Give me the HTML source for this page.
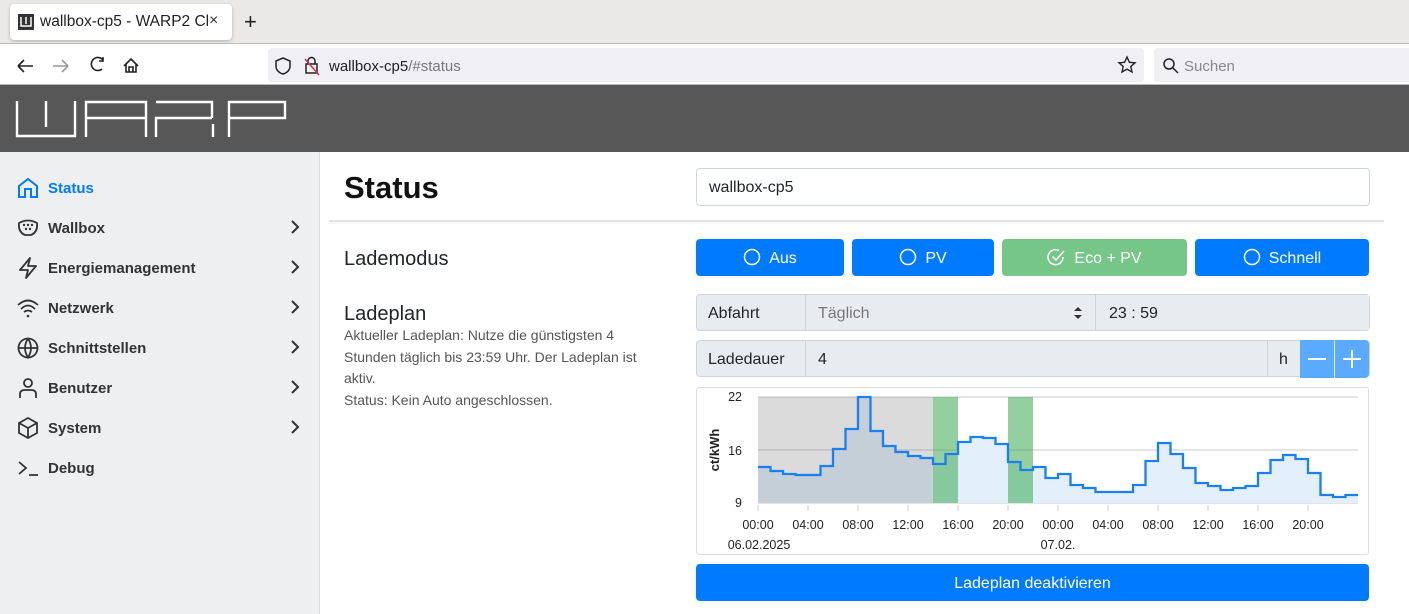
<!DOCTYPE html>
<html><head><meta charset="utf-8"><style>
*{box-sizing:border-box;margin:0;padding:0}
body{width:1409px;height:614px;overflow:hidden;font-family:"Liberation Sans",sans-serif;background:#fff;position:relative;color:#212529}
.a{position:absolute}
.tabbar{left:0;top:0;width:1409px;height:44px;background:#eae9e7;border-bottom:1px solid #bdbdbd}
.tab{left:10px;top:4px;width:222px;height:36px;background:#fff;border-radius:4px;box-shadow:0 1px 3px rgba(0,0,0,.25)}
.nav{left:0;top:44px;width:1409px;height:41px;background:#fff;border-bottom:1px solid #bbb}
.url{left:268px;top:48px;width:876px;height:34px;background:#f0f0f4;border-radius:4px}
.srch{left:1154px;top:48px;width:260px;height:34px;background:#f0f0f4;border-radius:4px}
.hdr{left:0;top:85px;width:1409px;height:67px;background:#575757}
.side{left:0;top:152px;width:320px;height:462px;background:#eeeff1;border-right:1px solid #dcdcdc}
.it{left:0;width:320px;height:40px;font-size:15px;font-weight:bold;color:#333;line-height:40px}
.it span{position:absolute;left:48px;top:2px}
.it svg{position:absolute;left:17px;top:10px}
.it .ch{left:287px;top:12px}
.btn{height:37px;border-radius:4px;color:#fff;font-size:16px;text-align:center;line-height:39px;background:#007bff}
.grp{background:#e9ecef;border:1px solid #ced4da;height:37px;font-size:16px;line-height:35px}
.lbl{font-size:16px;color:#212529}
.axis{font-size:12.5px;fill:#222}
</style></head><body>
<div class="a tabbar"></div>
<div class="a tab"><div class="a" style="left:8px;top:10px;width:16px;height:16px;background:#333"><svg width="16" height="16" style="position:absolute;left:0;top:0"><path d="M3 3V12H13V3M8 3V10" stroke="#fff" stroke-width="1.5" fill="none"/></svg></div><div class="a" style="left:30px;top:9px;font-size:15.5px;color:#222;white-space:nowrap;width:168px;overflow:hidden">wallbox-cp5 - WARP2 Cha</div><div class="a" style="left:199px;top:8px;font-size:16px;color:#333">×</div></div>
<div class="a" style="left:244px;top:9px;font-size:22px;color:#222">+</div>
<div class="a nav"></div>
<svg class="a" style="left:10px;top:52px" width="140" height="28"><g fill="none" stroke="#222" stroke-width="1.6"><path d="M8 14H23M8 14L14 8M8 14L14 20"/><path d="M43 14H58M58 14L52 8M58 14L52 20" stroke="#999"/><path d="M93 8A6.5 6.5 0 1 0 92 17M93 5V9H89"/><path d="M114 14L121 7L128 14M116 12V20H126V12M119 20V15H123V20"/></g></svg>
<div class="a url"></div>
<svg class="a" style="left:274px;top:55px" width="50" height="22"><g fill="none" stroke="#222" stroke-width="1.5"><path d="M9 3L16 6V11C16 15 13 18 9 19C5 18 2 15 2 11V6Z"/><rect x="32" y="9" width="11" height="9"/><path d="M34 9V6A3.5 3.5 0 0 1 41 6V9"/><path d="M31 4L45 20" stroke="#e22850"/></g></svg>
<div class="a" style="left:329px;top:58px;font-size:15px;color:#222">wallbox-cp5<span style="color:#777">/#status</span></div>
<svg class="a" style="left:1117px;top:55px" width="20" height="20"><path d="M10 2L12.4 7.3L18 7.8L13.8 11.5L15 17L10 14.2L5 17L6.2 11.5L2 7.8L7.6 7.3Z" fill="none" stroke="#222" stroke-width="1.4"/></svg>
<div class="a srch"></div>
<svg class="a" style="left:1162px;top:57px" width="18" height="18"><circle cx="7" cy="7" r="5" fill="none" stroke="#222" stroke-width="1.5"/><path d="M11 11L16 16" stroke="#222" stroke-width="1.5"/></svg>
<div class="a" style="left:1184px;top:58px;font-size:15px;color:#888">Suchen</div>
<div class="a hdr"></div>
<svg class="a" style="left:0;top:85px" width="300" height="67"><g fill="none" stroke="#fff" stroke-width="2.4"><path d="M17 16V51H75V16M46 16V42"/><path d="M86 52V33H146M86 33V17H146V52"/><path d="M156 52V33H212M156 17H212V33M213 39V52"/><path d="M229 52V17H285V33H229"/></g></svg>
<div class="a side"></div>
<div class="a it" style="top:167px;color:#007bff"><svg width="22" height="22"><path d="M2 9L11 2L20 9V20H14V12H8V20H2Z" fill="none" stroke="#007bff" stroke-width="2"/></svg><span>Status</span></div>
<div class="a it" style="top:207px"><svg width="22" height="22"><path d="M2 6Q11 1 20 6Q21 15 14 18H8Q1 15 2 6Z" fill="none" stroke="#333" stroke-width="1.8"/><g fill="#333"><circle cx="7" cy="8" r="1.2"/><circle cx="11" cy="8" r="1.2"/><circle cx="15" cy="8" r="1.2"/><circle cx="9" cy="12" r="1.2"/><circle cx="13" cy="12" r="1.2"/></g></svg><span>Wallbox</span><svg class="ch" width="16" height="16"><path d="M5 2L11 8L5 14" fill="none" stroke="#333" stroke-width="2"/></svg></div>
<div class="a it" style="top:247px"><svg width="22" height="22"><path d="M13 1L3 13H11L9 21L19 9H11Z" fill="none" stroke="#333" stroke-width="1.8" stroke-linejoin="round"/></svg><span>Energiemanagement</span><svg class="ch" width="16" height="16"><path d="M5 2L11 8L5 14" fill="none" stroke="#333" stroke-width="2"/></svg></div>
<div class="a it" style="top:287px"><svg width="22" height="22"><g fill="none" stroke="#333" stroke-width="1.8"><path d="M1 8Q11 -1 21 8M4 12Q11 5 18 12M7 15Q11 12 15 15"/></g><circle cx="11" cy="19" r="1.3" fill="#333"/></svg><span>Netzwerk</span><svg class="ch" width="16" height="16"><path d="M5 2L11 8L5 14" fill="none" stroke="#333" stroke-width="2"/></svg></div>
<div class="a it" style="top:327px"><svg width="22" height="22"><g fill="none" stroke="#333" stroke-width="1.8"><circle cx="11" cy="11" r="9.5"/><path d="M1.5 11H20.5M11 1.5Q5 11 11 20.5Q17 11 11 1.5"/></g></svg><span>Schnittstellen</span><svg class="ch" width="16" height="16"><path d="M5 2L11 8L5 14" fill="none" stroke="#333" stroke-width="2"/></svg></div>
<div class="a it" style="top:367px"><svg width="22" height="22"><g fill="none" stroke="#333" stroke-width="1.8"><circle cx="11" cy="6" r="4"/><path d="M3 21V17Q3 13 8 13H14Q19 13 19 17V21"/></g></svg><span>Benutzer</span><svg class="ch" width="16" height="16"><path d="M5 2L11 8L5 14" fill="none" stroke="#333" stroke-width="2"/></svg></div>
<div class="a it" style="top:407px"><svg width="22" height="22"><g fill="none" stroke="#333" stroke-width="1.8" stroke-linejoin="round"><path d="M11 1L20 6V16L11 21L2 16V6Z M2 6L11 11L20 6M11 11V21"/></g></svg><span>System</span><svg class="ch" width="16" height="16"><path d="M5 2L11 8L5 14" fill="none" stroke="#333" stroke-width="2"/></svg></div>
<div class="a it" style="top:447px"><svg width="22" height="22"><g fill="none" stroke="#333" stroke-width="1.8"><path d="M2 5L9 11L2 17M12 18H21"/></g></svg><span>Debug</span></div>

<div class="a" style="left:344px;top:170px;font-size:31px;font-weight:bold;color:#111">Status</div>
<div class="a" style="left:696px;top:168px;width:674px;height:38px;border:1px solid #ced4da;border-radius:4px;font-size:16px;line-height:38px;padding-left:12px">wallbox-cp5</div>
<div class="a" style="left:329px;top:220px;width:1055px;height:2px;background:#e2e2e2;box-shadow:0 1px 2px rgba(0,0,0,.08)"></div>
<div class="a" style="left:344px;top:248px;font-size:20px">Lademodus</div>
<div class="a btn" style="left:696px;top:239px;width:148px"><svg width="18" height="18" style="vertical-align:-3px;margin-right:8px"><circle cx="9" cy="9" r="7.5" fill="none" stroke="#fff" stroke-width="1.5"/></svg>Aus</div>
<div class="a btn" style="left:852px;top:239px;width:142px"><svg width="18" height="18" style="vertical-align:-3px;margin-right:8px"><circle cx="9" cy="9" r="7.5" fill="none" stroke="#fff" stroke-width="1.5"/></svg>PV</div>
<div class="a btn" style="left:1002px;top:239px;width:185px;background:#75c687"><svg width="20" height="18" style="vertical-align:-3px;margin-right:7px"><path d="M16 9A7.5 7.5 0 1 1 12 2.5" fill="none" stroke="#fff" stroke-width="1.5"/><path d="M5.5 8.5L9 12L17 3" fill="none" stroke="#fff" stroke-width="1.5"/></svg>Eco + PV</div>
<div class="a btn" style="left:1195px;top:239px;width:174px"><svg width="18" height="18" style="vertical-align:-3px;margin-right:8px"><circle cx="9" cy="9" r="7.5" fill="none" stroke="#fff" stroke-width="1.5"/></svg>Schnell</div>

<div class="a" style="left:344px;top:303px;font-size:20px">Ladeplan</div>
<div class="a" style="left:344px;top:325px;width:310px;font-size:14px;line-height:21.5px;color:#555">Aktueller Ladeplan: Nutze die günstigsten 4 Stunden täglich bis 23:59 Uhr. Der Ladeplan ist aktiv.<br>Status: Kein Auto angeschlossen.</div>

<div class="a grp" style="left:696px;top:294px;width:674px;border-radius:4px"></div>
<div class="a" style="left:708px;top:305px" ><span class="lbl">Abfahrt</span></div>
<div class="a" style="left:805px;top:295px;width:1px;height:35px;background:#ced4da"></div>
<div class="a" style="left:818px;top:305px;font-size:16px;color:#777">Täglich</div>
<svg class="a" style="left:1073px;top:306px" width="10" height="14"><path d="M1 5L5 1L9 5ZM1 9L5 13L9 9Z" fill="#333"/></svg>
<div class="a" style="left:1095px;top:295px;width:1px;height:35px;background:#ced4da"></div>
<div class="a" style="left:1096px;top:295px;width:273px;height:35px;background:#e9ecef"></div>
<div class="a" style="left:1109px;top:305px;font-size:16px">23 : 59</div>

<div class="a grp" style="left:696px;top:340px;width:674px;border-radius:4px"></div>
<div class="a" style="left:708px;top:351px"><span class="lbl">Ladedauer</span></div>
<div class="a" style="left:805px;top:341px;width:1px;height:35px;background:#ced4da"></div>
<div class="a" style="left:818px;top:351px;font-size:16px">4</div>
<div class="a" style="left:1267px;top:341px;width:1px;height:35px;background:#ced4da"></div>
<div class="a" style="left:1279px;top:351px;font-size:16px">h</div>
<div class="a" style="left:1300px;top:340px;width:34px;height:38px;background:#5aabff"></div>
<div class="a" style="left:1335px;top:340px;width:34px;height:38px;background:#5aabff;border-radius:0 4px 4px 0"></div>
<svg class="a" style="left:1300px;top:340px" width="70" height="38"><path d="M8 19H26M43 19H61M52 10V28" stroke="#fff" stroke-width="2"/></svg>

<div class="a" style="left:696px;top:387px;width:673px;height:168px;border:1px solid #dcdcdc;border-radius:3px"></div>
<svg class="a" style="left:696px;top:387px" width="673" height="168" viewBox="696 387 673 168">
<g stroke="#e4e4e4" stroke-width="2"><path d="M758 397H1358M758 450H1358M758 503H1358"/></g>
<path d="M758 503V467H770.5V471H783V474H795.5V475H820.5V466H833V449H845.5V429H858V397H870.5V431H883V446H895.5V452H908V456H920.5V458H933V464H945.5V454H958V442H970.5V437H983V438H995.5V444H1008V462H1020.5V470H1033V467H1045.5V478H1058V474H1070.5V485H1083V488H1095.5V492H1133V485H1145.5V461H1158V443H1170.5V454H1183V468H1195.5V483H1208V486H1220.5V490H1233V488H1245.5V486H1258V473H1270.5V460H1283V455H1295.5V459H1308V473H1320.5V495H1333V497H1345.5V495H1358V503Z" fill="#e3f0fc"/>
<rect x="758" y="397" width="175" height="106" fill="rgba(90,90,90,0.22)"/>
<rect x="933" y="397" width="25" height="106" fill="rgba(60,170,80,0.55)"/>
<rect x="1008" y="397" width="25" height="106" fill="rgba(60,170,80,0.55)"/>
<path d="M758 467H770.5V471H783V474H795.5V475H820.5V466H833V449H845.5V429H858V397H870.5V431H883V446H895.5V452H908V456H920.5V458H933V464H945.5V454H958V442H970.5V437H983V438H995.5V444H1008V462H1020.5V470H1033V467H1045.5V478H1058V474H1070.5V485H1083V488H1095.5V492H1133V485H1145.5V461H1158V443H1170.5V454H1183V468H1195.5V483H1208V486H1220.5V490H1233V488H1245.5V486H1258V473H1270.5V460H1283V455H1295.5V459H1308V473H1320.5V495H1333V497H1345.5V495H1358" fill="none" stroke="#1a7ff0" stroke-width="2.3"/>
<g stroke="#ccc" stroke-width="1"><path d="M758 505V511M808 505V511M858 505V511M908 505V511M958 505V511M1008 505V511M1058 505V511M1108 505V511M1158 505V511M1208 505V511M1258 505V511M1308 505V511"/></g>
<g class="axis" text-anchor="end"><text x="742" y="401">22</text><text x="742" y="455">16</text><text x="742" y="507">9</text></g>
<text x="719" y="450" transform="rotate(-90 719 450)" text-anchor="middle" style="font-size:13px;font-weight:bold" fill="#222">ct/kWh</text>
<g class="axis" text-anchor="middle"><text x="758" y="529">00:00</text><text x="808" y="529">04:00</text><text x="858" y="529">08:00</text><text x="908" y="529">12:00</text><text x="958" y="529">16:00</text><text x="1008" y="529">20:00</text><text x="1058" y="529">00:00</text><text x="1108" y="529">04:00</text><text x="1158" y="529">08:00</text><text x="1208" y="529">12:00</text><text x="1258" y="529">16:00</text><text x="1308" y="529">20:00</text><text x="759" y="549">06.02.2025</text><text x="1058" y="549">07.02.</text></g>
</svg>
<div class="a btn" style="left:696px;top:564px;width:673px">Ladeplan deaktivieren</div>
</body></html>
